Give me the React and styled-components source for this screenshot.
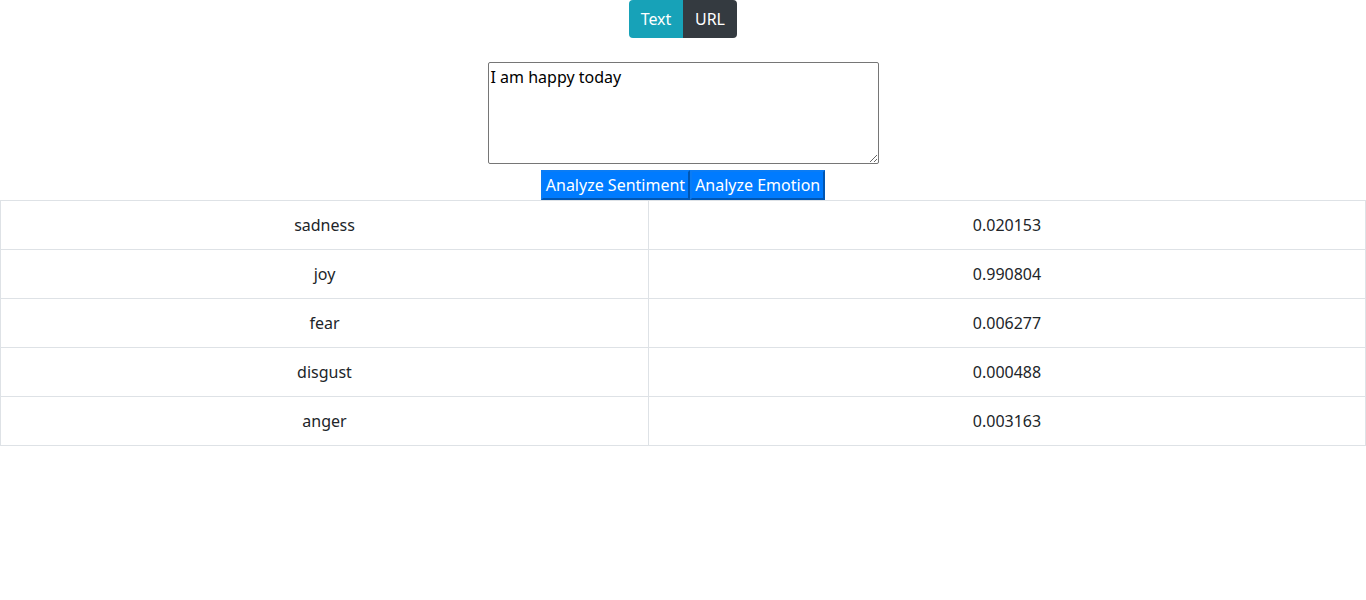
import React from "react";
import styled, { createGlobalStyle } from "styled-components";

const Global = createGlobalStyle`
  body {
    margin: 0;
    font-family: "Noto Sans", "Open Sans", sans-serif;
    font-size: 16px;
    color: #212529;
    background: #fff;
  }
`;

const Page = styled.div`
  display: flex;
  flex-direction: column;
  align-items: center;
`;

const Toggle = styled.div`
  display: flex;
`;

const ToggleButton = styled.button`
  height: 38px;
  padding: 0 8px;
  border: none;
  font: inherit;
  font-size: 16px;
  color: #fff;
  background: ${(p) => (p.$active ? "#17a2b8" : "#343a40")};
  border-radius: ${(p) => (p.$first ? "4px 0 0 4px" : "0 4px 4px 0")};
  width: 54px;
`;

const TextArea = styled.textarea`
  margin-top: 24px;
  width: 391px;
  height: 102px;
  box-sizing: border-box;
  border: 1px solid #767676;
  border-radius: 2px;
  padding: 3px 2px 2px;
  font-family: inherit;
  font-size: 16px;
  color: #000;
  resize: both;
`;

const Actions = styled.div`
  display: flex;
  margin-top: 6px;
`;

const ActionButton = styled.button`
  height: 30px;
  padding: 0 3px;
  font: inherit;
  font-size: 16px;
  color: #fff;
  background: #007bff;
  border-style: solid;
  border-width: 2px;
  border-color: #0a7cf5 #0056b3 #0056b3 #0a7cf5;
`;

const Table = styled.table`
  width: 100%;
  border-collapse: collapse;
`;

const Cell = styled.td`
  border: 1px solid #dee2e6;
  padding: 12px;
  line-height: 24px;
  text-align: center;
  width: ${(p) => p.$w || "auto"};
`;

const rows = [
  ["sadness", "0.020153"],
  ["joy", "0.990804"],
  ["fear", "0.006277"],
  ["disgust", "0.000488"],
  ["anger", "0.003163"],
];

export default function App() {
  return (
    <>
      <Global />
      <Page>
        <Toggle>
          <ToggleButton $active $first>Text</ToggleButton>
          <ToggleButton>URL</ToggleButton>
        </Toggle>
        <TextArea defaultValue="I am happy today" />
        <Actions>
          <ActionButton>Analyze Sentiment</ActionButton>
          <ActionButton>Analyze Emotion</ActionButton>
        </Actions>
      </Page>
      <Table>
        <tbody>
          {rows.map(([k, v]) => (
            <tr key={k}>
              <Cell $w="623px">{k}</Cell>
              <Cell>{v}</Cell>
            </tr>
          ))}
        </tbody>
      </Table>
    </>
  );
}
